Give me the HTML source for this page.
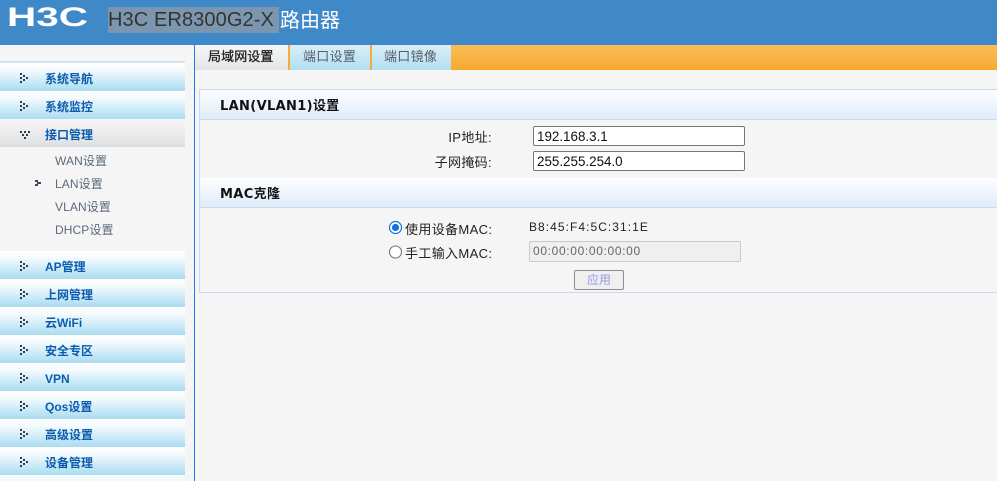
<!DOCTYPE html>
<html lang="zh"><head><meta charset="utf-8"><title>H3C ER8300G2-X</title>
<style>
*{box-sizing:border-box}
html,body{margin:0;padding:0;width:997px;height:481px;overflow:hidden;background:#f5f5f5;font-family:"Liberation Sans","Noto Sans CJK SC",sans-serif}
.a{position:absolute;white-space:nowrap}
#hd{left:0;top:0;width:997px;height:45px;background:#4089c9}
#sel{left:108px;top:7px;width:171px;height:26px;background:#7b96ae;color:#333;font-size:20px;line-height:26px;letter-spacing:.1px}
#rt{left:280px;top:8px;color:#fff;font-size:20px;line-height:26px}
.m{left:0;width:185px;height:28px;background:linear-gradient(#fff 0,#f4fbfe 25%,#a9dcf1 100%);color:#0b5cae;font-size:12px;font-weight:bold;line-height:32px;padding-left:45px}
.m.g{background:linear-gradient(#f6f6f6 0,#eeeeee 40%,#dcdfe1 100%)}
.s{left:55px;font-size:12px;color:#5c6a7c;line-height:16px;letter-spacing:.1px}
.tab{top:45px;height:25px;line-height:24px;font-size:13px;color:#555e66;background:linear-gradient(#d9eef8,#b2dff2);letter-spacing:.3px}
.lb{font-size:13px;color:#222;text-align:right;line-height:16px;letter-spacing:.35px}
.ip{height:20px;width:212px;left:533px;background:#fff;border:1px solid #767676;border-radius:2px;font-size:13.4px;color:#111;line-height:19px;padding-left:3px}
.ph{left:200px;width:797px;background:linear-gradient(#fcfdff,#e0ecfa);font-family:"DejaVu Sans","Noto Sans CJK SC",sans-serif;font-size:13px;font-weight:bold;color:#111;padding-left:20px;letter-spacing:.35px}
.sep{top:45px;width:2px;height:25px;background:#f4ad3e}
</style></head><body>
<div class="a" id="hd"></div>
<svg class="a" style="left:7px;top:5px" width="84" height="24"><text x="0" y="21" font-family="Liberation Sans" font-weight="bold" font-size="27" fill="#fff" textLength="81" lengthAdjust="spacingAndGlyphs">H3C</text></svg>
<div class="a" id="sel">H3C ER8300G2-X</div><div class="a" id="rt">路由器</div>

<div class="a" style="left:0;top:61px;width:185px;height:2px;background:#d5e3ee"></div>
<div class="a" style="left:194px;top:45px;width:1px;height:436px;background:#1a7ee6"></div>
<div class="a" style="left:0;top:475px;width:185px;height:6px;background:#f3fafe"></div>

<div class="a m" style="top:63px">系统导航</div>
<div class="a m" style="top:91px">系统监控</div>
<div class="a m g" style="top:119px">接口管理</div>
<div class="a s" style="top:153px">WAN设置</div>
<div class="a s" style="top:176px">LAN设置</div>
<div class="a s" style="top:199px">VLAN设置</div>
<div class="a s" style="top:222px">DHCP设置</div>
<div class="a m" style="top:251px">AP管理</div>
<div class="a m" style="top:279px">上网管理</div>
<div class="a m" style="top:307px">云WiFi</div>
<div class="a m" style="top:335px">安全专区</div>
<div class="a m" style="top:363px">VPN</div>
<div class="a m" style="top:391px">Qos设置</div>
<div class="a m" style="top:419px">高级设置</div>
<div class="a m" style="top:447px">设备管理</div>

<svg class="a" style="left:0;top:0" width="60" height="481" fill="#2b3a4e">
<defs><g id="ar"><path d="M0 0h2v2H0zM0 4h2v2H0zM0 8h2v2H0zM3 2h2v2H3zM3 6h2v2H3zM6 4h2v2H6z"/></g>
<g id="dn"><path d="M0 0h2v2H0zM4 0h2v2H4zM8 0h2v2H8zM2 3h2v2H2zM6 3h2v2H6zM4 6h2v2H4z"/></g></defs>
<use href="#ar" x="20" y="73"/><use href="#ar" x="20" y="101"/><use href="#dn" x="20" y="131"/>
<use href="#ar" x="20" y="261"/><use href="#ar" x="20" y="289"/><use href="#ar" x="20" y="317"/><use href="#ar" x="20" y="345"/><use href="#ar" x="20" y="373"/><use href="#ar" x="20" y="401"/><use href="#ar" x="20" y="429"/><use href="#ar" x="20" y="457"/>
<path d="M35 180h3v2h3v2h-3v2h-3v-2h2v-2h-2z" fill="#3c4a60"/>
</svg>

<div class="a" style="left:195px;top:45px;width:802px;height:25px;background:linear-gradient(#f8bd58,#f7a92f)"></div>
<div class="a tab" style="left:195px;width:93px;padding-left:13px;background:linear-gradient(#f6f6f6,#e2e5e8);color:#222;letter-spacing:.1px;-webkit-text-stroke:.3px #222">局域网设置</div>
<div class="a tab" style="left:290px;width:80px;padding-left:13px">端口设置</div>
<div class="a tab" style="left:372px;width:79px;padding-left:12px">端口镜像</div>
<div class="a sep" style="left:288px"></div><div class="a sep" style="left:370px"></div>

<div class="a" style="left:199px;top:89px;width:798px;height:204px;border:1px solid #c6dcf2;border-right:0"></div>
<div class="a ph" style="top:90px;height:30px;line-height:33px;border-bottom:1px solid #c6dcf2">LAN(VLAN1)设置</div>
<div class="a lb" style="left:400px;width:92px;top:130px">IP地址:</div>
<div class="a ip" style="top:126px">192.168.3.1</div>
<div class="a lb" style="left:400px;width:92px;top:155px">子网掩码:</div>
<div class="a ip" style="top:151px">255.255.254.0</div>
<div class="a ph" style="top:178px;height:30px;line-height:34px;border-bottom:1px solid #c6dcf2">MAC克隆</div>

<svg class="a" style="left:388px;top:220px" width="16" height="40">
<circle cx="7.5" cy="7.5" r="6" fill="#fff" stroke="#0f72e5" stroke-width="1.2"/><circle cx="7.5" cy="7.5" r="3.6" fill="#0f72e5"/>
<circle cx="7.5" cy="32" r="6" fill="#fff" stroke="#767676" stroke-width="1.1"/></svg>
<div class="a lb" style="left:405px;top:222px">使用设备MAC:</div>
<div class="a lb" style="left:405px;top:246px">手工输入MAC:</div>
<div class="a" style="left:529px;top:219px;font-size:12px;line-height:16px;color:#222;letter-spacing:1.05px">B8:45:F4:5C:31:1E</div>
<div class="a" style="left:529px;top:241px;width:212px;height:21px;background:#efefef;border:1px solid #c9c9c9;border-radius:2px;font-size:12px;line-height:19px;color:#666;padding-left:3px;letter-spacing:.65px">00:00:00:00:00:00</div>
<div class="a" style="left:574px;top:270px;width:50px;height:20px;background:#efefef;border:1px solid #8d8d8d;border-radius:2px;font-size:12px;line-height:19px;text-align:center;color:#9a9ae6">应用</div>
</body></html>
